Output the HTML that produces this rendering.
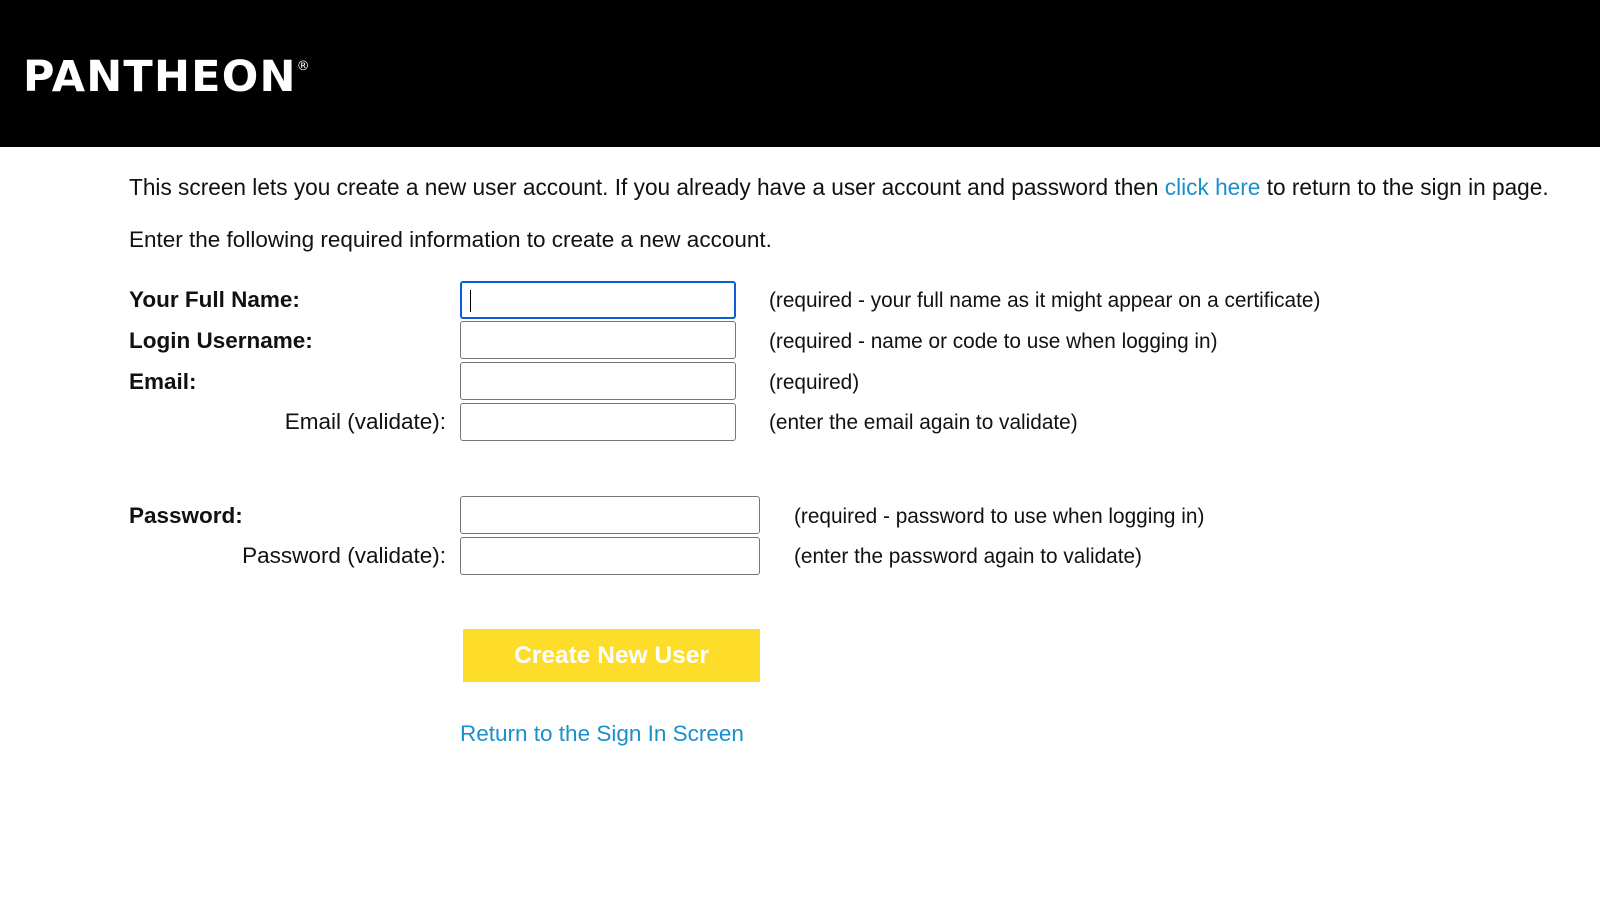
<!DOCTYPE html>
<html><head><style>
body{margin:0;width:1600px;height:905px;background:#fff;font-family:"Liberation Sans",Arial,sans-serif;color:#111;position:relative;overflow:hidden}
.hdr{position:absolute;left:0;top:0;width:1600px;height:147px;background:#000}
.logo{position:absolute;left:23px;top:52px;color:#fff;font-weight:bold;font-size:43px;letter-spacing:1.2px;font-family:"DejaVu Sans","Liberation Sans",sans-serif}
.logo sup{font-size:13px;position:relative;top:-6px;letter-spacing:0;font-weight:normal}
.t{position:absolute;font-size:22.5px;white-space:nowrap;line-height:24px}
.h{font-size:20.8px}
.b{font-weight:bold}
a{color:#1a8fd0;text-decoration:none}
.in{position:absolute;left:460px;width:274px;height:36px;border:1px solid #777;border-radius:3px;background:#fff}
.in.w{width:298px}
.focus{border:2px solid #0b5ed7;width:272px;height:34px}
.caret{position:absolute;left:8px;top:7px;width:1px;height:22px;background:#000}
.btn{position:absolute;left:463px;top:629px;width:297px;height:53px;background:#fddc2a;color:#fff;font-weight:bold;font-size:24.5px;text-align:center;line-height:53px}
</style></head><body>
<div class="hdr"><div class="logo">PANTHEON<sup>®</sup></div></div>
<div class="t" style="left:129px;top:175px;font-size:22.65px">This screen lets you create a new user account. If you already have a user account and password then <a>click here</a> to return to the sign in page.</div>
<div class="t" style="left:129px;top:228px">Enter the following required information to create a new account.</div>

<div class="t b" style="left:129px;top:288px">Your Full Name:</div>
<div class="in focus" style="top:281px"><div class="caret"></div></div>
<div class="t h" style="left:769px;top:289px">(required - your full name as it might appear on a certificate)</div>

<div class="t b" style="left:129px;top:329px">Login Username:</div>
<div class="in" style="top:321px"></div>
<div class="t h" style="left:769px;top:330px">(required - name or code to use when logging in)</div>

<div class="t b" style="left:129px;top:370px">Email:</div>
<div class="in" style="top:362px"></div>
<div class="t h" style="left:769px;top:371px">(required)</div>

<div class="t" style="right:1154px;top:410px">Email (validate):</div>
<div class="in" style="top:403px"></div>
<div class="t h" style="left:769px;top:411px">(enter the email again to validate)</div>

<div class="t b" style="left:129px;top:504px">Password:</div>
<div class="in w" style="top:496px"></div>
<div class="t h" style="left:794px;top:505px">(required - password to use when logging in)</div>

<div class="t" style="right:1154px;top:544px">Password (validate):</div>
<div class="in w" style="top:537px"></div>
<div class="t h" style="left:794px;top:545px">(enter the password again to validate)</div>

<div class="btn">Create New User</div>
<div class="t" style="left:460px;top:722px"><a>Return to the Sign In Screen</a></div>
</body></html>
